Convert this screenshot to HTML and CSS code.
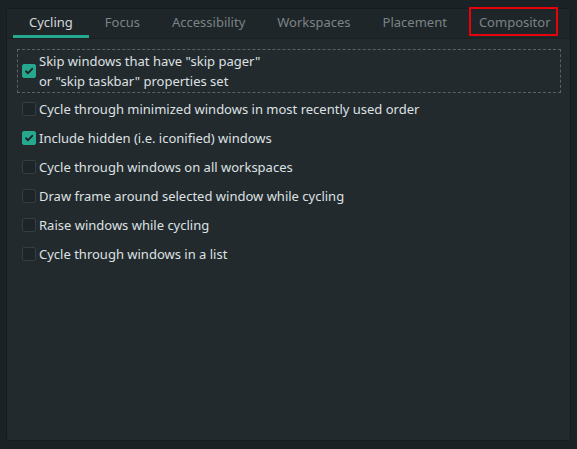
FILE: index.html
```html
<!DOCTYPE html>
<html>
<head>
<meta charset="utf-8">
<link rel="stylesheet" href="styles.css">
</head>
<body>
<div class="panel">
  <div class="tabs">
    <div class="tab active">Cycling</div>
    <div class="tab">Focus</div>
    <div class="tab">Accessibility</div>
    <div class="tab">Workspaces</div>
    <div class="tab">Placement</div>
    <div class="tab marked">Compositor</div>
  </div>
  <div class="content">
    <label class="row focused">
      <span class="cb on"><svg viewBox="0 0 14 14" width="14" height="14"><path d="M4 7.3 L6 9.2 L10.2 4.8" fill="none" stroke="#1b2326" stroke-width="1.9" stroke-linecap="round" stroke-linejoin="round"/></svg></span>
      <span class="txt">Skip windows that have "skip pager"<br>or "skip taskbar" properties set</span>
    </label>
    <label class="row">
      <span class="cb"></span>
      <span class="txt">Cycle through minimized windows in most recently used order</span>
    </label>
    <label class="row">
      <span class="cb on"><svg viewBox="0 0 14 14" width="14" height="14"><path d="M4 7.3 L6 9.2 L10.2 4.8" fill="none" stroke="#1b2326" stroke-width="1.9" stroke-linecap="round" stroke-linejoin="round"/></svg></span>
      <span class="txt">Include hidden (i.e. iconified) windows</span>
    </label>
    <label class="row">
      <span class="cb"></span>
      <span class="txt">Cycle through windows on all workspaces</span>
    </label>
    <label class="row">
      <span class="cb"></span>
      <span class="txt">Draw frame around selected window while cycling</span>
    </label>
    <label class="row">
      <span class="cb"></span>
      <span class="txt">Raise windows while cycling</span>
    </label>
    <label class="row">
      <span class="cb"></span>
      <span class="txt">Cycle through windows in a list</span>
    </label>
  </div>
</div>
</body>
</html>
```
FILE: styles.css
```css
html, body {
  margin: 0;
  padding: 0;
  background: #1b2225;
}
body {
  padding: 8px 6px 6px 6px;
  font-family: "Noto Sans", sans-serif;
  font-size: 13px;
  color: #dde1e2;
}
.panel {
  height: 433px;
  box-sizing: border-box;
  border: 1px solid #161c1e;
  border-radius: 3px;
  background: #232a2e;
  display: flex;
  flex-direction: column;
}
.tabs {
  display: flex;
  height: 29px;
  background: #1f2629;
  border-bottom: 1px solid #1a2023;
  padding-left: 6px;
}
.tab {
  box-sizing: border-box;
  height: 29px;
  padding: 4px 16px 0 16px;
  color: #7b8386;
  position: relative;
  white-space: nowrap;
}
.tab.active {
  color: #d4d8d9;
}
.tab.active::after {
  content: "";
  position: absolute;
  left: 0;
  right: 0;
  bottom: 0;
  height: 3px;
  background: #26a88e;
}
.tab.marked::before {
  content: "";
  position: absolute;
  left: 6px;
  top: -2px;
  width: 89px;
  height: 29px;
  box-sizing: border-box;
  border: 2px solid #e8000b;
}
.content {
  padding: 10px 9px 0 10px;
  display: flex;
  flex-direction: column;
}
.row {
  display: flex;
  align-items: center;
  height: 29px;
  padding-left: 5px;
}
.row.focused {
  height: 44px;
  box-sizing: border-box;
  border: 1px dashed #596165;
  margin-bottom: 1px;
  padding-left: 4px;
  line-height: 20px;
}
.cb {
  flex: none;
  width: 14px;
  height: 14px;
  box-sizing: border-box;
  border: 1px solid #353d41;
  border-radius: 2px;
  background: #1e2528;
  margin-right: 3px;
  display: flex;
}
.cb.on {
  background: #26a88e;
  border-color: #26a88e;
}
.cb.on svg {
  margin: -1px;
}
.txt {
  white-space: nowrap;
}
```
